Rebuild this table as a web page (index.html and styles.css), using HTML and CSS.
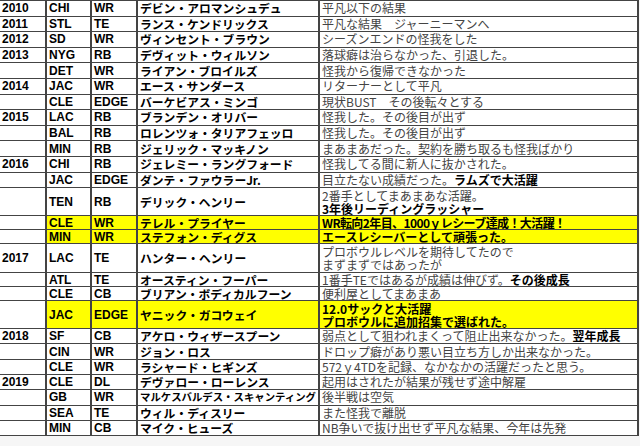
FILE: index.html
```html
<!DOCTYPE html>
<html lang="ja">
<head>
<meta charset="utf-8">
<link rel="stylesheet" href="styles.css">
</head>
<body>
<div class="sheet">
  <div class="c y">2010</div><div class="c t">CHI</div><div class="c t">WR</div><div class="c n">デビン・アロマンシュデュ</div><div class="c m">平凡以下の結果</div>
  <div class="c y">2011</div><div class="c t">STL</div><div class="c t">TE</div><div class="c n">ランス・ケンドリックス</div><div class="c m">平凡な結果　ジャーニーマンへ</div>
  <div class="c y">2012</div><div class="c t">SD</div><div class="c t">WR</div><div class="c n">ヴィンセント・ブラウン</div><div class="c m">シーズンエンドの怪我をした</div>
  <div class="c y">2013</div><div class="c t">NYG</div><div class="c t">RB</div><div class="c n">デヴィット・ウィルソン</div><div class="c m">落球癖は治らなかった、引退した。</div>
  <div class="c y"></div><div class="c t">DET</div><div class="c t">WR</div><div class="c n">ライアン・ブロイルズ</div><div class="c m">怪我から復帰できなかった</div>
  <div class="c y">2014</div><div class="c t">JAC</div><div class="c t">WR</div><div class="c n">エース・サンダース</div><div class="c m">リターナーとして平凡</div>
  <div class="c y"></div><div class="c t">CLE</div><div class="c t">EDGE</div><div class="c n">バーケビアス・ミンゴ</div><div class="c m">現状BUST　その後転々とする</div>
  <div class="c y">2015</div><div class="c t">LAC</div><div class="c t">RB</div><div class="c n">ブランデン・オリバー</div><div class="c m">怪我した。その後目が出ず</div>
  <div class="c y"></div><div class="c t">BAL</div><div class="c t">RB</div><div class="c n">ロレンツォ・タリアフェッロ</div><div class="c m">怪我した。その後目が出ず</div>
  <div class="c y"></div><div class="c t">MIN</div><div class="c t">RB</div><div class="c n">ジェリック・マッキノン</div><div class="c m">まあまあだった。契約を勝ち取るも怪我ばかり</div>
  <div class="c y">2016</div><div class="c t">CHI</div><div class="c t">RB</div><div class="c n">ジェレミー・ラングフォード</div><div class="c m">怪我してる間に新人に抜かされた。</div>
  <div class="c y"></div><div class="c t">JAC</div><div class="c t">EDGE</div><div class="c n">ダンテ・ファウラーJr.</div><div class="c m">目立たない成績だった。<b>ラムズで大活躍</b></div>
  <div class="c y"></div><div class="c t">TEN</div><div class="c t">RB</div><div class="c n">デリック・ヘンリー</div><div class="c m two">2番手としてまあまあな活躍。<br><b>3年後リーディングラッシャー</b></div>
  <div class="c y"></div><div class="c t hl">CLE</div><div class="c t hl">WR</div><div class="c n hl">テレル・プライヤー</div><div class="c m hl"><b class="tight">WR転向2年目、1000ｙレシーブ達成！大活躍！</b></div>
  <div class="c y"></div><div class="c t hl">MIN</div><div class="c t hl">WR</div><div class="c n hl">ステフォン・ディグス</div><div class="c m hl"><b>エースレシーバーとして頑張った。</b></div>
  <div class="c y">2017</div><div class="c t">LAC</div><div class="c t">TE</div><div class="c n">ハンター・ヘンリー</div><div class="c m two">プロボウルレベルを期待してたので<br>まずまずではあったが</div>
  <div class="c y"></div><div class="c t">ATL</div><div class="c t">TE</div><div class="c n">オースティン・フーパー</div><div class="c m">1番手TEではあるが成績は伸びず。<b>その後成長</b></div>
  <div class="c y"></div><div class="c t">CLE</div><div class="c t">CB</div><div class="c n">ブリアン・ボディカルフーン</div><div class="c m">便利屋としてまあまあ</div>
  <div class="c y"></div><div class="c t hl">JAC</div><div class="c t hl">EDGE</div><div class="c n hl">ヤニック・ガコウェイ</div><div class="c m two hl"><b>12.0サックと大活躍<br>プロボウルに追加招集で選ばれた。</b></div>
  <div class="c y">2018</div><div class="c t">SF</div><div class="c t">CB</div><div class="c n">アケロ・ウィザースプーン</div><div class="c m">弱点として狙われまくって阻止出来なかった。<b>翌年成長</b></div>
  <div class="c y"></div><div class="c t">CIN</div><div class="c t">WR</div><div class="c n">ジョン・ロス</div><div class="c m">ドロップ癖があり悪い目立ち方しか出来なかった。</div>
  <div class="c y"></div><div class="c t">CLE</div><div class="c t">WR</div><div class="c n">ラシャード・ヒギンズ</div><div class="c m">572ｙ4TDを記録、なかなかの活躍だったと思う。</div>
  <div class="c y">2019</div><div class="c t">CLE</div><div class="c t">DL</div><div class="c n">デヴァロー・ローレンス</div><div class="c m">起用はされたが結果が残せず途中解雇</div>
  <div class="c y"></div><div class="c t">GB</div><div class="c t">WR</div><div class="c n small">マルケスバルデス・スキャンティング</div><div class="c m">後半戦は空気</div>
  <div class="c y"></div><div class="c t">SEA</div><div class="c t">TE</div><div class="c n">ウィル・ディスリー</div><div class="c m">また怪我で離脱</div>
  <div class="c y"></div><div class="c t">MIN</div><div class="c t">CB</div><div class="c n">マイク・ヒューズ</div><div class="c m">NB争いで抜け出せず平凡な結果、今年は先発</div>
</div>
</body>
</html>
```
FILE: styles.css
```css
html, body {
  margin: 0;
  padding: 0;
  background: #f6f6f6;
}
.sheet {
  display: grid;
  width: 639px;
  box-sizing: border-box;
  padding: 1px 2px 1px 0;
  background: #444444;
  column-gap: 2px;
  row-gap: 1px;
  grid-template-columns: 45px 43px 44px 180px 317px;
  grid-template-rows: repeat(12, 14.6px) 27px 13px 13px 28px 13px 13px 27px repeat(7, 14.3px);
}
.c {
  background: #ffffff;
  display: flex;
  align-items: center;
  padding-left: 2px;
  white-space: nowrap;
  color: #000;
  line-height: 12px;
  min-width: 0;
}
.y, .t {
  font-family: "Liberation Sans", "Noto Sans CJK JP", sans-serif;
  font-weight: bold;
  font-size: 12px;
}
.n {
  font-family: "Noto Sans CJK JP", sans-serif;
  font-weight: bold;
  font-size: 11.8px;
}
.n.small {
  font-size: 10.4px;
}
.m {
  font-family: "Noto Sans CJK JP", sans-serif;
  font-weight: normal;
  font-size: 12px;
  color: #444;
}
.m b {
  color: #000;
  font-weight: bold;
}
.m b.tight {
  letter-spacing: -0.6px;
}
.m.two {
  display: block;
  line-height: 13px;
  padding-top: 1px;
}
.hl {
  background: #ffff00;
}
```
